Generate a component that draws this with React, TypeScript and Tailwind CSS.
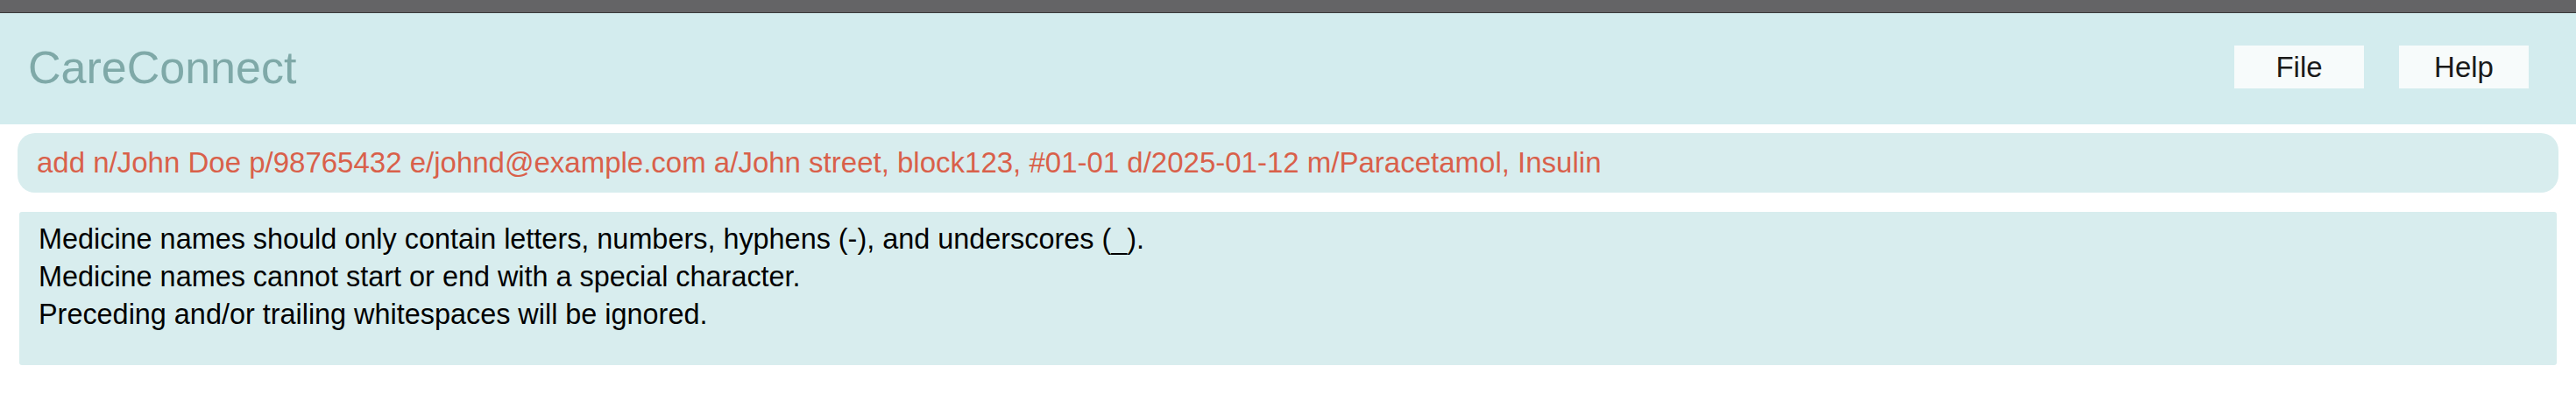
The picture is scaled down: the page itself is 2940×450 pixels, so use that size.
import React from 'react'

const font = { fontFamily: '"Liberation Sans", Arial, sans-serif' }

const errorLines = [
  'Medicine names should only contain letters, numbers, hyphens (-), and underscores (_).',
  'Medicine names cannot start or end with a special character.',
  'Preceding and/or trailing whitespaces will be ignored.',
]

function MenuButton({ label }: { label: string }) {
  return (
    <button className="w-[148px] h-[49px] bg-[#f7fbfb] text-[33px] text-[#1a1a1a] flex items-center justify-center">
      {label}
    </button>
  )
}

export default function App() {
  const [command] = React.useState(
    'add n/John Doe p/98765432 e/johnd@example.com a/John street, block123, #01-01 d/2025-01-12 m/Paracetamol, Insulin'
  )

  return (
    <div className="w-[2940px] h-[450px] bg-white overflow-hidden" style={font}>
      <div className="h-[15px] bg-[#646466] border-b border-[#3a3a3a]"></div>

      <div className="h-[127px] bg-[#d3ecee] flex items-center justify-between pl-[32px] pr-[54px]">
        <h1 className="text-[52px] text-[#7fa9a8] leading-none -mt-[4px]">CareConnect</h1>
        <div className="flex gap-[40px] -mt-[4px]">
          <MenuButton label="File" />
          <MenuButton label="Help" />
        </div>
      </div>

      <div className="mt-[10px] mx-[20px] h-[68px] rounded-[20px] bg-[#d8edee] flex items-center px-[22px]">
        <span className="text-[33px] text-[#d9604a] whitespace-nowrap">{command}</span>
      </div>

      <div className="mt-[22px] mx-[22px] h-[175px] rounded-[3px] bg-[#d8edee] px-[22px] pt-[10px]">
        {errorLines.map((line) => (
          <p key={line} className="text-[32.4px] leading-[43px] text-black whitespace-nowrap">
            {line}
          </p>
        ))}
      </div>
    </div>
  )
}
